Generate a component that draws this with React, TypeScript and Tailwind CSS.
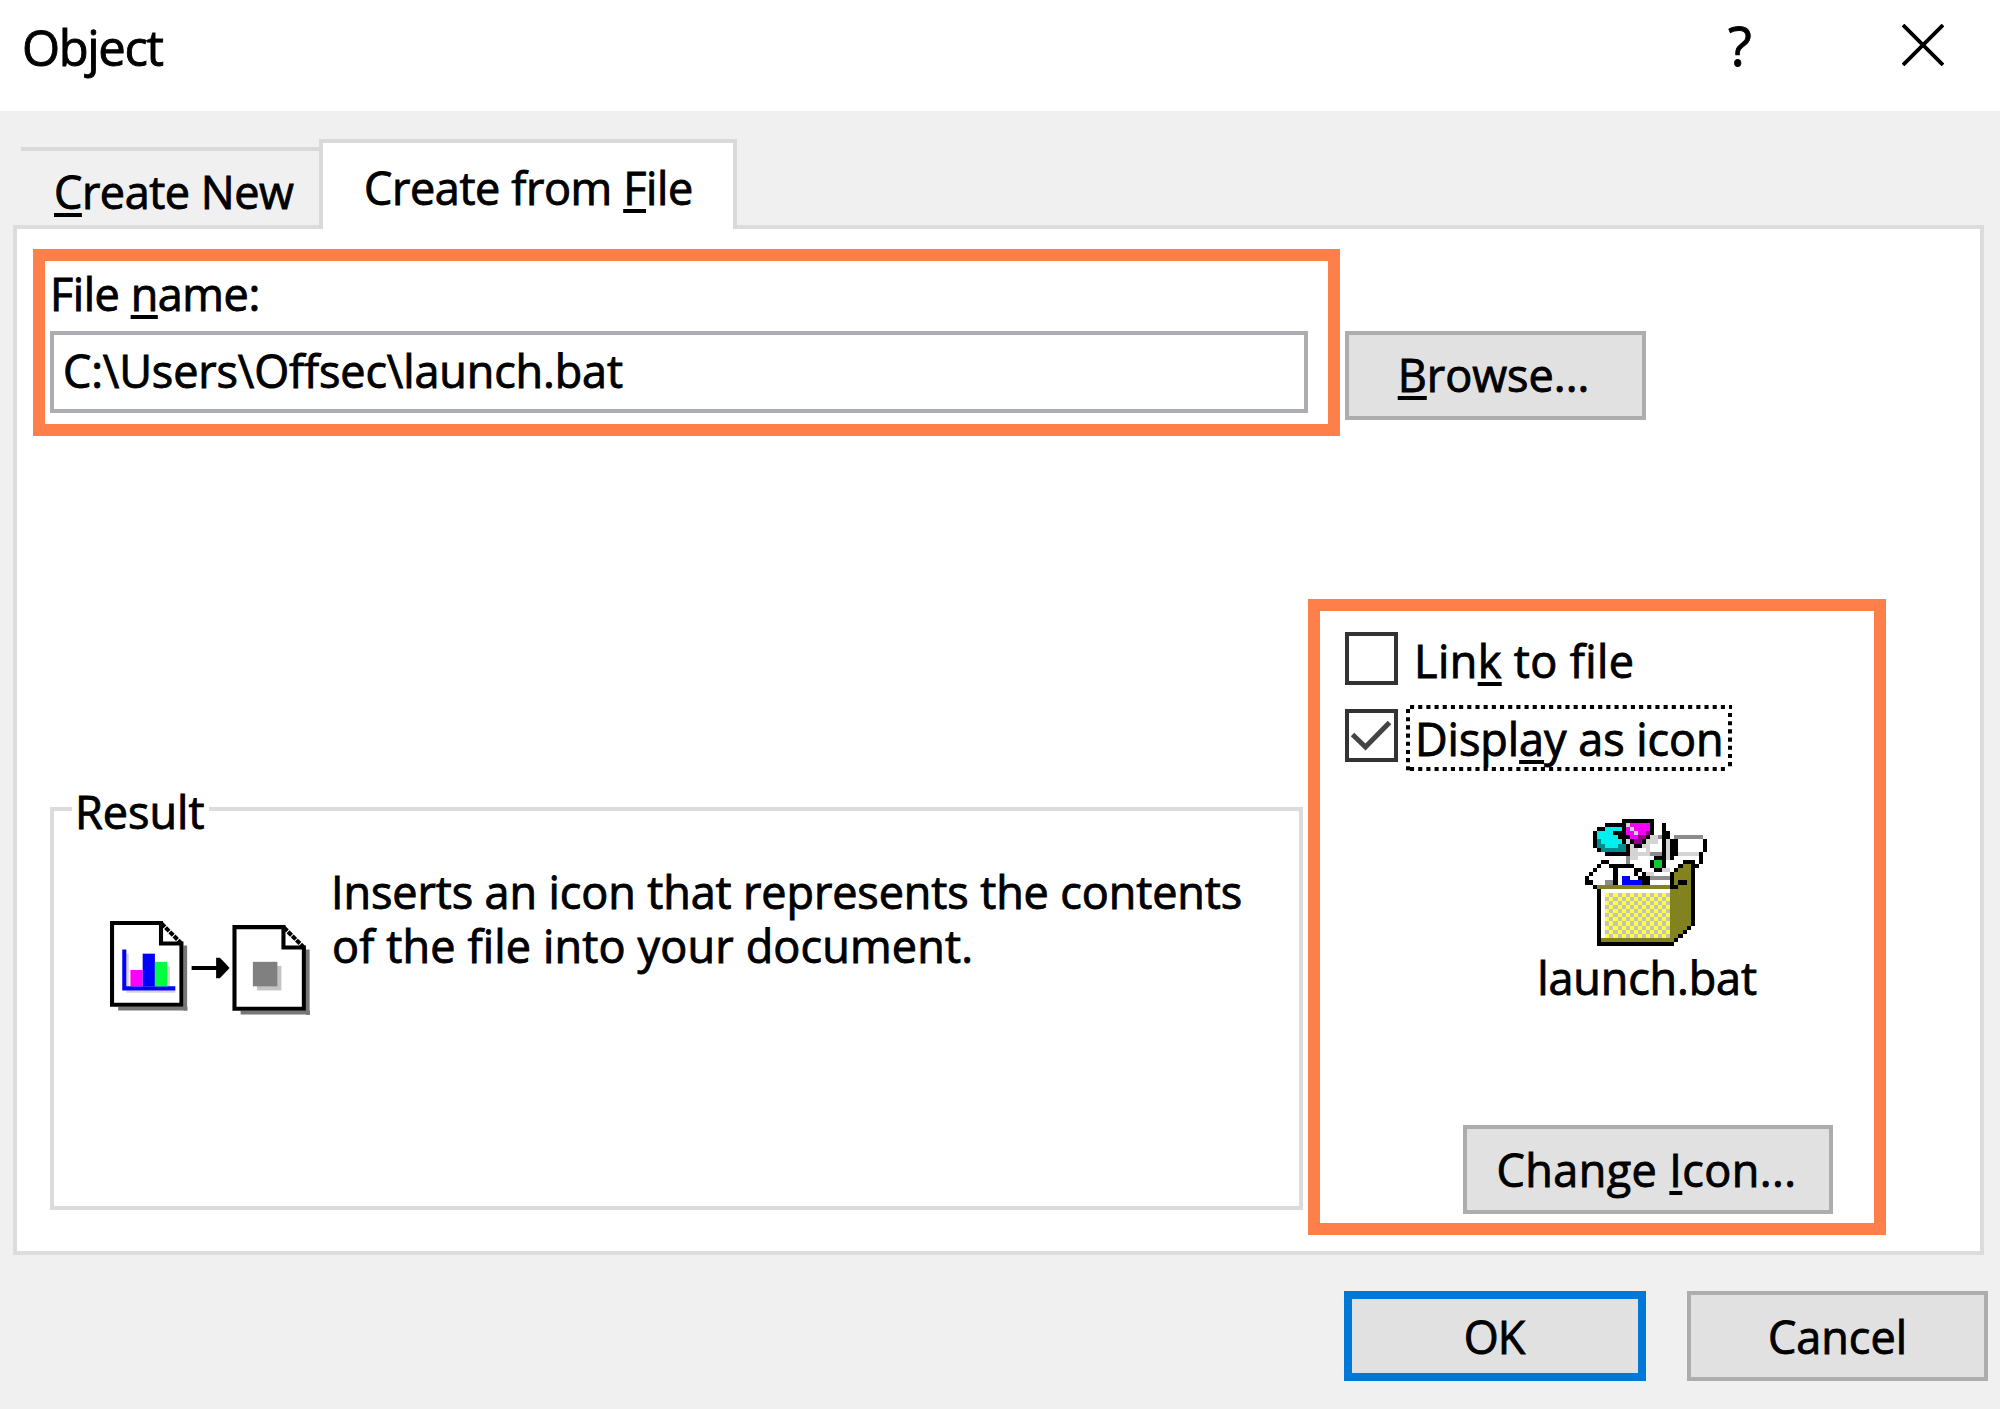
import type { ReactNode } from "react";

const PACKAGE_COLORS: Record<string, string> = {
  K: "#000000",
  C: "#00f0f0",
  T: "#008c8c",
  M: "#f400f4",
  P: "#90008c",
  G: "#10c830",
  g: "#d4d4d4",
  s: "#8c8c8c",
  W: "#ffffff",
  B: "#0000ff",
  O: "#82821e",
  Y: "#ffff45",
  L: "#c3c3b8",
};

const FACE_A = "YLYLYLYLYLYLYLYL";
const FACE_B = "LYLYLYLYLYLYLYLY";

const PACKAGE_ROWS = [
  ".........KKKKKKKK",
  ".....KKKKKgMMMMMK..K",
  "...KKCCCCKMgMMMMK..K",
  "..KCCCCKKKMMgMMPK..KK",
  "..KCCCCCKKKMMPPKggsKK.sssssss",
  "..KTCCCCCKgKPPKggg.KgKKWWWWWWK",
  "..KTTCCCTTKgKKgg...KgKKWWWWWWK",
  "...KTTTTTTKgg..g...KgKKWWWWWWK",
  ".....KKKKKKgggggsssKgKKgggggK",
  "..........sgg....KKKgK......K",
  "....KK....s.....KGGK....KKK.K",
  "...K..KKKKKK....KGGK...KOOKK",
  "..K....KWWWWKK...KKgg.KOOOK",
  ".K.....KWWWWKWKgg....KOOOOK",
  "K......KWBBWWKKKsssssKOOOOK",
  "KK...ssKWBBBBBKKWWWWWKOKKOK",
  "..KOOOOOOOOOOOOOOOOOOKKOOOK",
  "...KWWWWWWWWWWWWWWWWWOOOOOK",
  "...KW" + FACE_A + "OOOOOK",
  "...KW" + FACE_B + "OOOOOK",
  "...KW" + FACE_A + "OOOOOK",
  "...KW" + FACE_B + "OOOOOK",
  "...KW" + FACE_A + "OOOOOK",
  "...KW" + FACE_B + "OOOOOK",
  "...KW" + FACE_A + "OOOOOK",
  "...KW" + FACE_B + "OOOOOK",
  "...KW" + FACE_A + "OOOOK",
  "...KW" + FACE_B + "OOOK",
  "...KW" + FACE_A + "OOK",
  "...KOOOOOOOOOOOOOOOOOOK",
  "...KKKKKKKKKKKKKKKKKKK",
];

function PackageIcon() {
  return (
    <svg className="block h-[127px] w-[126px]" viewBox="0 0 31 31" preserveAspectRatio="none" shapeRendering="crispEdges">
      {PACKAGE_ROWS.flatMap((row, y) =>
        row.split("").map((c, x) =>
          c === "." ? null : <rect key={`${x}-${y}`} x={x} y={y} width="1" height="1" fill={PACKAGE_COLORS[c]} />,
        ),
      )}
    </svg>
  );
}

function Page({ x, y }: { x: number; y: number }) {
  return (
    <g transform={`translate(${x} ${y})`}>
      <path d="M2 21h17v.9H2zM18 6h.9v16H18z" fill="#777" />
      <path d="M13 6h4v.5h-4z" fill="#aaa" />
      <path d="M.5 .5h12l5 5v15H.5z" fill="#fff" />
      <path d="M0 0h13v5h5v16H0zM1 1v19h16V6h-5V1z" fill="#000" fillRule="evenodd" />
      <path d="M12.600 .6l5 5" stroke="#000" strokeWidth="1" strokeDasharray="1.200 .25" fill="none" />
    </g>
  );
}

function ResultIcon() {
  return (
    <svg className="block h-[98px] w-[200px] shrink-0" viewBox="0 0 49 24" preserveAspectRatio="none">
      <Page x={0} y={0} />
      <path d="M4 8h.6v8H4zM14 11h.7v5H14zM4 17h12v.6H4z" fill="#d9d5c8" />
      <path d="M3 7h1v9h12v1H3z" fill="#00f" />
      <path d="M5 12h3v4H5z" fill="#f0f" />
      <path d="M8 8h3v8H8z" fill="#00f" />
      <path d="M11 10h3v6h-3z" fill="#00ff40" />
      <path d="M20 11h6V9h.9l1 1 1.4 1.5-1.4 1.5-1 1H26v-2h-6z" fill="#000" />
      <Page x={30} y={1} />
      <path d="M36 11h6v6h-6z" fill="#c4c4c4" />
      <path d="M35 10h6v6h-6z" fill="#808080" />
    </svg>
  );
}

function Key({ children }: { children: ReactNode }) {
  return (
    <span className="underline decoration-[4px] underline-offset-[4px] [text-decoration-skip-ink:none]">{children}</span>
  );
}

function CheckBox({ checked = false }: { checked?: boolean }) {
  return (
    <span className="block h-[53px] w-[53px] shrink-0 border-4 border-[#333] bg-white">
      {checked && (
        <svg className="block h-[45px] w-[45px]" viewBox="0 0 45 45" fill="none" stroke="#444" strokeWidth="5">
          <path d="M3.500 21.500L16.500 34L40.500 9.500" />
        </svg>
      )}
    </span>
  );
}

export default function App() {
  return (
    <div className="flex h-[1409px] w-[2000px] flex-col overflow-hidden bg-[#f0f0f0] font-['Open_Sans',sans-serif] text-[45px] leading-[53px] whitespace-nowrap text-black [-webkit-text-stroke:0.9px_black]">
      <header className="flex h-[111px] shrink-0 items-start bg-white pl-[22px]">
        <h1 className="mt-[22px] w-[1706px] text-[49px] leading-[50px] tracking-[-1.4px]">Object</h1>
        <button className="mt-4 block w-[174px] text-left text-[55px] leading-[57px]">?</button>
        <svg className="mt-6 block h-[42px] w-[42px]" viewBox="0 0 42 42" stroke="#000" strokeWidth="3.8">
          <path d="M1 1L41 41M41 1L1 41" />
        </svg>
      </header>

      <div className="flex h-[114px] shrink-0 items-end pl-[21px]">
        <div className="h-[78px] w-[298px] border-t-4 border-[#d9d9d9] pt-3.5 pl-[33px] tracking-[-0.45px]">
          <Key>C</Key>reate New
        </div>
        <div className="z-10 -mb-1 h-[90px] w-[418px] border-x-4 border-t-4 border-[#d9d9d9] bg-white pt-[18px] pl-[41px] tracking-[-0.4px]">
          Create from <Key>F</Key>ile
        </div>
      </div>

      <main className="relative ml-[13px] h-[1030px] w-[1971px] shrink-0 border-4 border-[#dcdcdc] bg-white pl-[33px]">
        <label className="block h-[90px] pt-[38px] tracking-[-0.45px]">
          File <Key>n</Key>ame:
        </label>
        <div className="mt-3 flex items-start gap-[37px]">
          <div className="h-[82px] w-[1258px] border-4 border-[#abadb3] bg-white pt-[9px] pl-[9px] tracking-[-0.15px]">
            C:\Users\Offsec\launch.bat
          </div>
          <button className="flex h-[89px] w-[301px] items-center justify-center border-4 border-[#adadad] bg-[#e1e1e1] pr-1 pb-0.5">
            <span><Key>B</Key>rowse...</span>
          </button>
        </div>

        <div className="mt-[212px] flex items-start gap-[42px]">
          <fieldset className="mt-[147px] h-[431px] w-[1253px] min-w-0 border-4 border-[#dcdcdc]">
            <legend className="ml-[18px] h-[59px] w-[137px] pt-1 pl-[3px] leading-[57px]">Result</legend>
            <div className="flex items-start pl-14">
              <div className="pt-[83px]">
                <ResultIcon />
              </div>
              <p className="pt-[27px] pl-[21px] leading-[54px] tracking-[-0.11px]">
                Inserts an icon that represents the contents
                <br />
                <span className="pl-px tracking-[0.15px]">of the file into your document.</span>
              </p>
            </div>
          </fieldset>

          <div className="w-[490px]">
            <div className="flex h-[77px] items-start">
              <CheckBox />
              <span className="mt-0.5 ml-4 tracking-[0.4px]">
                Lin<Key>k</Key> to file
              </span>
            </div>
            <div className="flex h-[110px] items-start">
              <CheckBox checked />
              <span className="relative -mt-1 ml-2 block h-[66px] w-[326px] pt-[7px] pl-[9px] tracking-[-0.05px]">
                Displ<Key>a</Key>y as icon
                <svg className="absolute inset-0 h-[66px] w-[326px]" viewBox="0 0 326 66" fill="none" stroke="#000" strokeWidth="4">
                  <path d="M4 2H326M4 64H322M2 4V66M324 8V62" strokeDasharray="4.100 4.080" />
                </svg>
              </span>
            </div>
            <div className="ml-[118px] flex w-[370px] flex-col items-center">
              <PackageIcon />
              <span className="mt-[5px] pr-0.5 tracking-[-0.15px]">launch.bat</span>
            </div>
            <button className="mt-[121px] ml-[118px] flex h-[89px] w-[370px] items-center justify-center border-4 border-[#adadad] bg-[#e1e1e1] pr-[3px] tracking-[0.4px]">
              <span>Change <Key>I</Key>con...</span>
            </button>
          </div>
        </div>

        {/* Highlight frames laid over the form */}
        <div className="pointer-events-none absolute top-5 left-4 h-[187px] w-[1307px] border-12 border-[#ff7f4a]" />
        <div className="pointer-events-none absolute top-[370px] left-[1291px] h-[636px] w-[578px] border-12 border-[#ff7f4a]" />
      </main>

      <footer className="mt-9 flex justify-end gap-[41px] pr-3">
        <button className="flex h-[90px] w-[302px] items-center justify-center border-8 border-[#0078d7] bg-[#e1e1e1] pr-0.5 tracking-[-1px]">
          OK
        </button>
        <button className="flex h-[90px] w-[301px] items-center justify-center border-4 border-[#adadad] bg-[#e1e1e1]">
          Cancel
        </button>
      </footer>
    </div>
  );
}
